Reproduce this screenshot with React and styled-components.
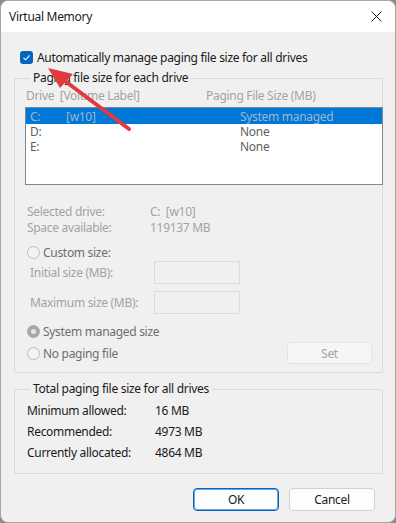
import React from "react";
import styled, { createGlobalStyle } from "styled-components";

const GlobalStyle = createGlobalStyle`
  html, body {
    margin: 0;
    padding: 0;
    background: #8c8c8c;
  }
  body {
    font-family: "Segoe UI", "Noto Sans", "Open Sans", sans-serif;
    font-size: 12px;
    line-height: 15px;
    color: #1a1a1a;
  }
`;

const Window = styled.div`
  position: relative;
  width: 394px;
  height: 521px;
  background: #f0f0f0;
  border: 1px solid #a6a6a6;
  border-radius: 8px;
  overflow: hidden;
  display: flex;
  flex-direction: column;
  letter-spacing: -0.3px;
`;

const TitleBar = styled.div`
  height: 31px;
  flex: none;
  background: #fff;
  display: flex;
  align-items: center;
  justify-content: space-between;
  padding: 0 8px 1px 8px;
  box-sizing: border-box;
`;

const Title = styled.span`
  font-size: 12px;
  color: #1b1b1b;
`;

const CloseButton = styled.div`
  width: 12px;
  height: 12px;
  margin-right: 5px;
  display: flex;
  align-items: center;
  justify-content: center;
`;

const Body = styled.div`
  padding: 17px 12px 0 13px;
  display: flex;
  flex-direction: column;
`;

const CheckRow = styled.label`
  height: 16px;
  display: flex;
  align-items: center;
  gap: 4px;
  padding-left: 6px;
`;

const CheckBox = styled.span`
  width: 13px;
  height: 13px;
  border-radius: 3px;
  background: #0067c0;
  display: flex;
  align-items: center;
  justify-content: center;
  flex: none;
`;

const Group = styled.fieldset`
  margin: ${(p) => p.$top}px 0 0 0;
  padding: 0 0 ${(p) => p.$bottom}px 10px;
  border: 1px solid #dadada;
  border-radius: 2px;
  min-width: 0;
  display: flex;
  flex-direction: column;
`;

const Legend = styled.legend`
  padding: 0 3px;
  margin-left: 5px;
  line-height: 16px;
  color: #1a1a1a;
`;

const HeaderRow = styled.div`
  height: 16px;
  margin-top: 1px;
  display: grid;
  grid-template-columns: 180px 1fr;
  align-items: center;
  color: #a3a3a3;
  padding-left: 1px;
`;

const ListBox = styled.div`
  margin-top: 4px;
  margin-right: -1px;
  height: 78px;
  box-sizing: border-box;
  border: 1px solid #828790;
  background: #fff;
  display: flex;
  flex-direction: column;
`;

const ListRow = styled.div`
  height: ${(p) => (p.$selected ? 16 : 15)}px;
  line-height: 15px;
  display: grid;
  grid-template-columns: 36px 174px 1fr;
  align-items: center;
  padding-left: 4px;
  background: ${(p) => (p.$selected ? "#0078d7" : "transparent")};
  color: ${(p) => (p.$selected ? "#9fb6d3" : "#5f5f5f")};
`;

const InfoRows = styled.div`
  margin-top: 18px;
  display: flex;
  flex-direction: column;
`;

const InfoRow = styled.div`
  height: ${(p) => p.$h || 16}px;
  display: grid;
  grid-template-columns: ${(p) => p.$col || 123}px 1fr;
  align-items: center;
  padding-left: 2px;
  color: ${(p) => p.$color || "#a3a3a3"};
`;

const RadioRow = styled.div`
  height: ${(p) => p.$h || 16}px;
  margin-top: ${(p) => p.$top || 0}px;
  display: flex;
  align-items: center;
  justify-content: space-between;
  padding-left: 2px;
  padding-right: 10px;
`;

const RadioLabel = styled.span`
  display: flex;
  align-items: center;
  gap: 3px;
  color: #6e6e6e;
`;

const Radio = styled.span`
  width: 13px;
  height: 13px;
  box-sizing: border-box;
  border-radius: 50%;
  border: 1px solid ${(p) => (p.$checked ? "#a8a8a8" : "#bdbdbd")};
  background: ${(p) => (p.$checked ? "#a8a8a8" : "#f3f3f3")};
  display: flex;
  align-items: center;
  justify-content: center;
  flex: none;
  &::after {
    content: "";
    width: 5px;
    height: 5px;
    border-radius: 50%;
    background: ${(p) => (p.$checked ? "#e6e6e6" : "transparent")};
  }
`;

const SizeRow = styled.div`
  height: 23px;
  margin-top: ${(p) => p.$top}px;
  display: grid;
  grid-template-columns: 124px 86px;
  align-items: center;
  padding-left: 5px;
  color: #a3a3a3;
`;

const SizeInput = styled.div`
  height: 23px;
  box-sizing: border-box;
  border: 1px solid #dcdcdc;
  background: #f0f0f0;
`;

const SetButton = styled.div`
  width: 85px;
  height: 22px;
  box-sizing: border-box;
  border: 1px solid #e4e4e4;
  border-radius: 4px;
  background: #f6f6f6;
  color: #a3a3a3;
  display: flex;
  align-items: center;
  justify-content: center;
`;

const TotalRows = styled.div`
  margin-top: 3px;
  display: flex;
  flex-direction: column;
`;

const ButtonRow = styled.div`
  margin-top: 14px;
  display: flex;
  justify-content: flex-end;
  gap: 10px;
  padding-right: 8px;
`;

const DialogButton = styled.button`
  width: 86px;
  height: 23px;
  box-sizing: border-box;
  border-radius: 4px;
  background: #fdfdfd;
  border: 1px solid ${(p) => (p.$primary ? "#0067c0" : "#d0d0d0")};
  box-shadow: ${(p) => (p.$primary ? "inset 0 0 0 1px #6fa6d9" : "none")};
  font: inherit;
  letter-spacing: inherit;
  color: #1a1a1a;
  padding: 0;
`;

const Arrow = styled.svg`
  position: absolute;
  left: 0;
  top: 0;
  pointer-events: none;
`;

const drives = [
  { letter: "C:", label: "[w10]", size: "System managed", selected: true },
  { letter: "D:", label: "", size: "None" },
  { letter: "E:", label: "", size: "None" },
];

const totals = [
  ["Minimum allowed:", "16 MB"],
  ["Recommended:", "4973 MB"],
  ["Currently allocated:", "4864 MB"],
];

export default function App() {
  return (
    <>
      <GlobalStyle />
      <Window>
        <TitleBar>
          <Title>Virtual Memory</Title>
          <CloseButton>
            <svg width="11" height="11" viewBox="0 0 11 11">
              <path d="M0.5 0.5 L10.5 10.5 M10.5 0.5 L0.5 10.5" stroke="#1b1b1b" strokeWidth="1" />
            </svg>
          </CloseButton>
        </TitleBar>
        <Body>
          <CheckRow>
            <CheckBox>
              <svg width="9" height="9" viewBox="0 0 9 9">
                <path d="M1.5 4.8 L3.6 6.8 L7.6 2.4" fill="none" stroke="#fff" strokeWidth="1.1" />
              </svg>
            </CheckBox>
            Automatically manage paging file size for all drives
          </CheckRow>

          <Group $top={5} $bottom={8}>
            <Legend>Paging file size for each drive</Legend>
            <HeaderRow>
              <span>Drive&nbsp; [Volume Label]</span>
              <span>Paging File Size (MB)</span>
            </HeaderRow>
            <ListBox>
              {drives.map((d) => (
                <ListRow key={d.letter} $selected={d.selected}>
                  <span>{d.letter}</span>
                  <span>{d.label}</span>
                  <span>{d.size}</span>
                </ListRow>
              ))}
            </ListBox>

            <InfoRows>
              <InfoRow>
                <span>Selected drive:</span>
                <span>C:&nbsp; [w10]</span>
              </InfoRow>
              <InfoRow>
                <span>Space available:</span>
                <span>119137 MB</span>
              </InfoRow>
            </InfoRows>

            <RadioRow $top={9}>
              <RadioLabel>
                <Radio />
                Custom size:
              </RadioLabel>
            </RadioRow>
            <SizeRow $top={1}>
              <span>Initial size (MB):</span>
              <SizeInput />
            </SizeRow>
            <SizeRow $top={7}>
              <span>Maximum size (MB):</span>
              <SizeInput />
            </SizeRow>

            <RadioRow $top={9}>
              <RadioLabel>
                <Radio $checked />
                System managed size
              </RadioLabel>
            </RadioRow>
            <RadioRow $top={3} $h={22}>
              <RadioLabel>
                <Radio />
                No paging file
              </RadioLabel>
              <SetButton>Set</SetButton>
            </RadioRow>
          </Group>

          <Group $top={8} $bottom={10}>
            <Legend>Total paging file size for all drives</Legend>
            <TotalRows>
              {totals.map(([label, value]) => (
                <InfoRow key={label} $h={21} $col={128} $color="#1a1a1a">
                  <span>{label}</span>
                  <span>{value}</span>
                </InfoRow>
              ))}
            </TotalRows>
          </Group>

          <ButtonRow>
            <DialogButton $primary>OK</DialogButton>
            <DialogButton>Cancel</DialogButton>
          </ButtonRow>
        </Body>

        <Arrow width="396" height="523" viewBox="0 0 396 523">
          <line x1="128" y1="128" x2="60" y2="77" stroke="#e0393e" strokeWidth="4" strokeLinecap="round" />
          <polygon points="47,67 72,73 59,87" fill="#e0393e" />
        </Arrow>
      </Window>
    </>
  );
}
